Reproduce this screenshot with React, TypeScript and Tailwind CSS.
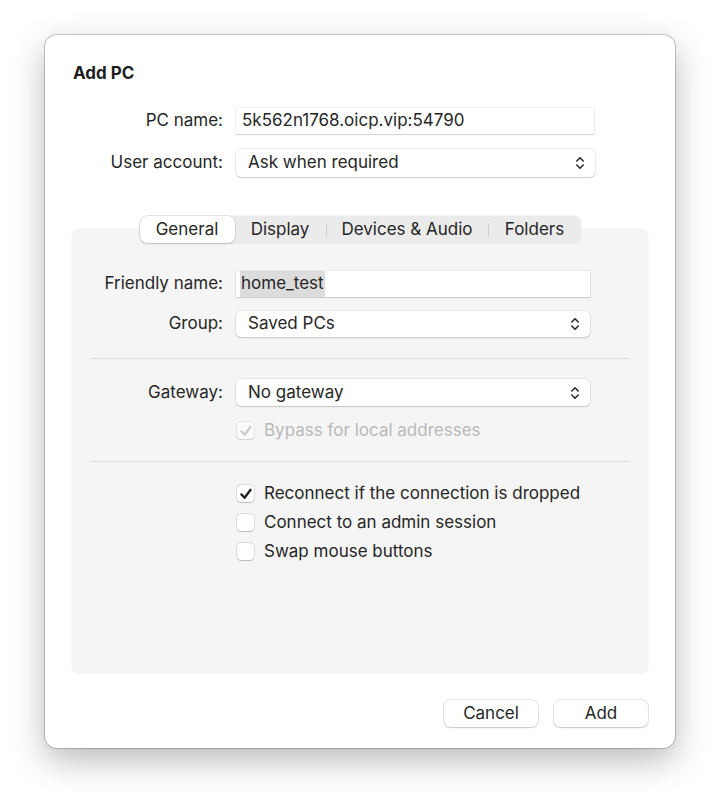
import React from "react";

const font = { fontFamily: "Inter, 'Noto Sans', 'Liberation Sans', sans-serif" };

function UpDown() {
  return (
    <svg width="10" height="14" viewBox="0 0 10 14" fill="none" stroke="#2a2a2a" strokeWidth="1.6" strokeLinecap="round" strokeLinejoin="round">
      <path d="M1.8 5 L5 1.8 L8.2 5" />
      <path d="M1.8 9 L5 12.2 L8.2 9" />
    </svg>
  );
}

function Check({ color = "#1d1d1d" }: { color?: string }) {
  return (
    <svg width="14" height="14" viewBox="0 0 14 14" fill="none" stroke={color} strokeWidth="2.3" strokeLinecap="round" strokeLinejoin="round">
      <path d="M2.4 7.4 L5.6 10.8 L11.6 2.8" />
    </svg>
  );
}

function Select({ value, className = "" }: { value: string; className?: string }) {
  return (
    <div
      className={`flex items-center justify-between rounded-[5px] bg-white pl-3 pr-[10px] text-[#262626] shadow-[0_0_0_0.5px_rgba(0,0,0,0.12),0_1px_1.5px_rgba(0,0,0,0.15)] ${className}`}
    >
      <span>{value}</span>
      <UpDown />
    </div>
  );
}

function TextField({ children, className = "" }: { children: React.ReactNode; className?: string }) {
  return (
    <div
      className={`flex items-center bg-white px-[6px] text-[#262626] shadow-[0_0_0_0.5px_rgba(0,0,0,0.1),0_1px_1px_rgba(0,0,0,0.12)] ${className}`}
    >
      {children}
    </div>
  );
}

function CheckRow({ label, checked, disabled }: { label: string; checked?: boolean; disabled?: boolean }) {
  return (
    <div className="flex h-[29px] items-center">
      <div
        className={`flex h-[17px] w-[17px] items-center justify-center rounded-[4px] bg-white shadow-[0_0_0_0.5px_rgba(0,0,0,0.2),0_0.5px_1px_rgba(0,0,0,0.15)] ${disabled ? "opacity-60" : ""}`}
      >
        {checked && <Check color={disabled ? "#b0b0b0" : "#1d1d1d"} />}
      </div>
      <span className={`ml-[10px] ${disabled ? "text-[#b9b9b9]" : "text-[#262626]"}`}>{label}</span>
    </div>
  );
}

function FormRow({ label, labelWidth, children, className = "" }: { label: string; labelWidth: string; children: React.ReactNode; className?: string }) {
  return (
    <div className={`flex items-center ${className}`}>
      <div className={`${labelWidth} shrink-0 pr-[13px] text-right text-[#262626]`}>{label}</div>
      {children}
    </div>
  );
}

const tabs = ["General", "Display", "Devices & Audio", "Folders"];
const tabWidths = ["w-[95px]", "w-[91px]", "w-[161px]", "w-[92px]"];

export default function App() {
  return (
    <div className="min-h-screen bg-white pl-[45px] pt-[35px] text-[17px]" style={font}>
      <div className="flex h-[713px] w-[630px] flex-col rounded-[12px] bg-white shadow-[0_0_0_1px_rgba(0,0,0,0.2),0_12px_34px_rgba(0,0,0,0.28)]">
        {/* Title */}
        <div className="pl-[28px] pt-[29px] text-[17px] font-bold leading-[18px] text-[#1e1e1e]">Add PC</div>

        {/* Connection */}
        <FormRow label="PC name:" labelWidth="w-[191px]" className="mt-[26px]">
          <TextField className="h-[26px] w-[358px]">5k562n1768.oicp.vip:54790</TextField>
        </FormRow>
        <FormRow label="User account:" labelWidth="w-[191px]" className="mt-[15px]">
          <Select value="Ask when required" className="h-[28px] w-[359px]" />
        </FormRow>

        {/* Tabbed group */}
        <div className="mt-[52px] ml-[27px] flex h-[444px] w-[576px] flex-col rounded-[7px] bg-[#f5f5f5] shadow-[0_0_0_0.5px_rgba(0,0,0,0.05)]">
          <div className="-mt-[13px] flex justify-center">
            <div className="flex h-[27px] items-center rounded-[7px] bg-[#ebebeb] shadow-[0_0_0_0.5px_rgba(0,0,0,0.07)]">
              {tabs.map((t, i) => (
                <React.Fragment key={t}>
                  {i > 1 && <div className="h-[14px] w-px bg-[#cdcdcd]" />}
                  <div
                    className={`flex h-[27px] items-center justify-center text-[#262626] ${tabWidths[i]} ${
                      i === 0 ? "rounded-[7px] bg-white shadow-[0_0_0_0.5px_rgba(0,0,0,0.14),0_1px_2px_rgba(0,0,0,0.14)]" : ""
                    }`}
                  >
                    {t}
                  </div>
                </React.Fragment>
              ))}
            </div>
          </div>

          <FormRow label="Friendly name:" labelWidth="w-[164px]" className="mt-[28px]">
            <TextField className="h-[26px] w-[354px]">
              <span className="-ml-[2px] bg-[#dcdcdc] px-[1px]">home_test</span>
            </TextField>
          </FormRow>
          <FormRow label="Group:" labelWidth="w-[164px]" className="mt-[14px]">
            <Select value="Saved PCs" className="h-[26px] w-[354px]" />
          </FormRow>

          <div className="mx-[18px] mt-[21px] h-px bg-[#dcdcdc]" />

          <FormRow label="Gateway:" labelWidth="w-[164px]" className="mt-[20px]">
            <Select value="No gateway" className="h-[27px] w-[354px]" />
          </FormRow>
          <div className="ml-[165px] mt-[10px]">
            <CheckRow label="Bypass for local addresses" checked disabled />
          </div>

          <div className="mx-[18px] mt-[16px] h-px bg-[#dcdcdc]" />

          <div className="ml-[165px] mt-[17px] flex flex-col">
            <CheckRow label="Reconnect if the connection is dropped" checked />
            <CheckRow label="Connect to an admin session" />
            <CheckRow label="Swap mouse buttons" />
          </div>
        </div>

        {/* Buttons */}
        <div className="mt-[27px] flex justify-end gap-[16px] pr-[27px]">
          {["Cancel", "Add"].map((b) => (
            <div
              key={b}
              className="flex h-[27px] w-[94px] items-center justify-center rounded-[6px] bg-white text-[#262626] shadow-[0_0_0_0.5px_rgba(0,0,0,0.18),0_1px_1.5px_rgba(0,0,0,0.14)]"
            >
              {b}
            </div>
          ))}
        </div>
      </div>
    </div>
  );
}
